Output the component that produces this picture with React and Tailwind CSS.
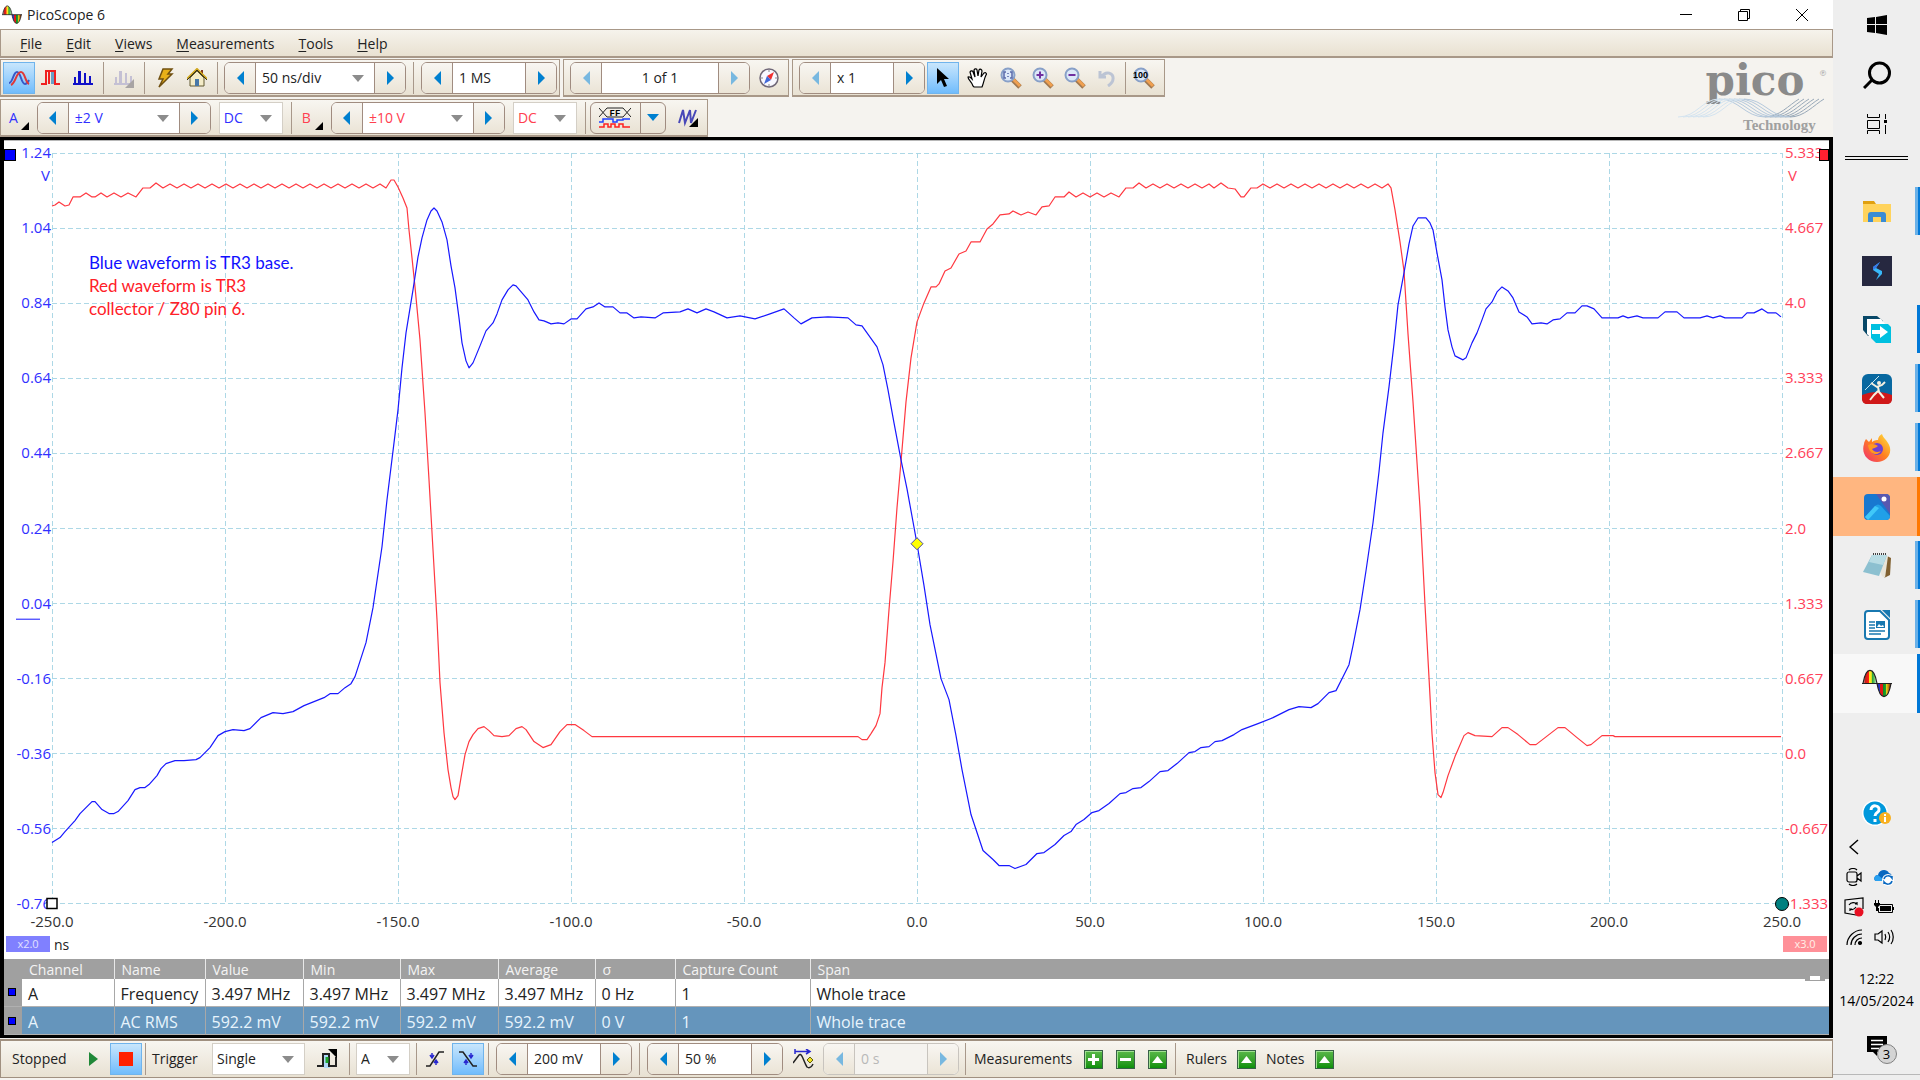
import { useState } from "react";

const BLUE_TRACE = "52,843 60,838 65,832 75,821 80,814 92,802 95,802 102,810 109,814 114,814 118,812 128,801 135,790 140,788 145,788 149,785 157,776 161,769 166,764 175,761 184,761 196,760 200,758 210,748 218,736 225,732 233,730 244,731 250,729 261,718 273,713 283,714 293,712 304,706 314,702 324,698 330,694 338,694 345,688 351,684 355,677 366,643 373,608 382,547 387,500 394,443 398,410 402,368 406,333 413,290 418,257 422,238 427,220 431,211 434,208 437,211 442,222 447,240 451,266 455,288 459,318 462,343 466,361 469,368 473,363 480,346 486,331 493,323 497,314 502,300 508,290 513,285 516,286 522,293 528,300 534,312 539,320 544,321 551,324 558,323 564,324 571,319 577,319 586,309 593,307 599,303 605,307 613,307 620,313 627,313 634,318 641,317 655,318 663,313 680,312 688,309 697,313 706,309 714,312 727,318 740,316 755,319 770,314 784,309 794,318 801,324 812,318 828,317 848,318 856,325 862,326 872,340 877,347 883,365 888,390 894,423 901,460 907,489 917,544 924,586 930,625 941,679 949,700 956,736 962,770 971,815 983,851 993,860 999,866 1009,866 1015,869 1026,865 1037,854 1044,853 1055,845 1064,836 1071,832 1076,825 1084,820 1092,813 1099,811 1109,804 1120,794 1126,793 1133,789 1141,788 1149,782 1160,772 1168,771 1177,764 1189,753 1195,752 1201,748 1209,747 1215,742 1222,741 1234,735 1242,730 1258,724 1273,718 1289,710 1299,707 1311,708 1318,704 1329,693 1336,691 1343,677 1349,665 1353,646 1360,610 1366,571 1373,523 1379,472 1383,433 1389,387 1394,344 1398,305 1404,273 1409,244 1413,226 1418,218 1426,218 1430,223 1433,230 1437,253 1442,280 1445,307 1448,330 1452,347 1455,356 1463,360 1466,358 1472,343 1477,333 1482,320 1486,309 1492,302 1497,292 1502,287 1508,291 1513,298 1519,312 1527,317 1532,324 1541,323 1547,324 1553,320 1560,319 1567,313 1575,313 1582,306 1587,306 1594,309 1602,318 1618,318 1623,316 1628,318 1637,316 1643,318 1658,318 1665,312 1677,312 1684,318 1700,318 1707,316 1713,318 1720,316 1725,318 1742,318 1747,313 1754,313 1762,309 1768,313 1776,313 1781,317";

// ripple along the top of the square wave
function ripple(from, count) {
  let pts = "";
  for (let i = 0; i < count; i++) {
    pts += `${from + i * 14},188 ${from + 7 + i * 14},184 `;
  }
  return pts;
}

const RED_TRACE =
  "52,206 55,205 59,202 65,206 69,205 73,197 80,197 86,193 92,197 95,197 101,193 107,197 114,193 121,197 128,193 136,197 143,188 150,188 156,183 " +
  ripple(163, 16) +
  "386,188 391,180 394,180 398,187 403,198 407,208 409,230 412,258 415,287 420,340 425,413 429,480 433,550 437,620 440,683 444,733 448,770 451,788 453,797 455,800 458,796 461,778 465,755 469,742 473,735 478,729 484,727 489,731 494,736 502,737 509,736 516,729 522,727 526,730 534,742 543,748 551,745 560,732 567,725 575,725 584,731 592,737 858,737 862,740 867,740 871,734 876,726 880,714 882,688 885,663 889,610 893,562 897,508 901,462 906,402 911,358 917,322 924,303 931,287 936,287 939,284 945,271 951,268 959,254 966,251 971,242 980,242 987,229 993,224 1000,215 1009,214 1013,211 1021,215 1028,212 1036,215 1042,207 1049,206 1055,197 1064,197 1069,192 1076,197 1083,193 1090,197 1097,193 1104,197 1111,193 1119,197 1126,188 1133,188 1139,183 " +
  ripple(1146, 5) +
  "1214,188 1221,183 1228,188 1235,189 1241,197 1244,197 1251,188 1257,188 1263,184 " +
  ripple(1270, 8) +
  "1382,188 1388,184 1391,188 1395,210 1400,242 1404,271 1408,334 1413,402 1420,508 1425,605 1429,678 1432,734 1435,773 1438,795 1441,798 1443,793 1448,776 1455,757 1464,736 1468,733 1475,736 1492,737 1502,728 1508,728 1518,735 1530,745 1536,745 1558,728 1565,728 1577,738 1587,746 1591,745 1602,736 1613,736 1615,737 1781,737";

const leftAxis = ["1.24", "1.04", "0.84", "0.64", "0.44", "0.24", "0.04", "-0.16", "-0.36", "-0.56", "-0.76"];
const rightAxis = ["5.333", "4.667", "4.0", "3.333", "2.667", "2.0", "1.333", "0.667", "0.0", "-0.667", "-1.333"];
const timeAxis = ["-250.0", "-200.0", "-150.0", "-100.0", "-50.0", "0.0", "50.0", "100.0", "150.0", "200.0", "250.0"];

const rows = [
  { id: 1, cells: ["A", "Frequency", "3.497 MHz", "3.497 MHz", "3.497 MHz", "3.497 MHz", "0 Hz", "1", "Whole trace"] },
  { id: 2, cells: ["A", "AC RMS", "592.2 mV", "592.2 mV", "592.2 mV", "592.2 mV", "0 V", "1", "Whole trace"] },
];

function Sep() {
  return <div className="h-8 w-px shrink-0 bg-[#a8988a]" />;
}

function Arrow({ left, off }) {
  return (
    <svg width="7" height="14" viewBox="0 0 7 14" className={off ? "text-[#78b8e0]" : "text-[#0080d0]"}>
      <path d={left ? "M7 0V14L0 7Z" : "M0 0V14L7 7Z"} fill="currentColor" />
    </svg>
  );
}

// value box with a step button at each end
function Spin({ label, value, width, drop, color = "text-[#222]", offLeft, offRight, center, off }) {
  const edge = off ? "border-[#c8c4be]" : "border-[#a08c80]";
  return (
    <div className={`flex h-8 shrink-0 overflow-hidden rounded-md border ${edge} bg-white ${width}`}>
      <button aria-label={`${label} down`} disabled={offLeft} className={`flex w-[31px] shrink-0 items-center justify-center border-r bg-gradient-to-b from-[#f8f6f2] to-[#ebe4d6] ${edge}`}>
        <Arrow left off={offLeft} />
      </button>
      {drop ? (
        <div className="relative min-w-0 flex-1">
          <select aria-label={label} className={`h-full w-full appearance-none bg-white px-1.5 outline-none ${color}`}>
            <option>{value}</option>
          </select>
          <Chevron />
        </div>
      ) : (
        <input aria-label={label} defaultValue={value} disabled={off} className={`min-w-0 flex-1 px-1.5 outline-none ${center ? "text-center" : ""} ${off ? "bg-[#f5f3ef] text-[#b8b8b8]" : `bg-white ${color}`}`} />
      )}
      <button aria-label={`${label} up`} disabled={offRight} className={`flex w-[31px] shrink-0 items-center justify-center border-l bg-gradient-to-b from-[#f8f6f2] to-[#ebe4d6] ${edge}`}>
        <Arrow off={offRight} />
      </button>
    </div>
  );
}

function Chevron() {
  return (
    <svg width="12" height="7" viewBox="0 0 12 7" className="pointer-events-none absolute top-3 right-2.5">
      <path d="M0 0H12L6 7Z" fill="#8c8c8c" />
    </svg>
  );
}

function Select({ label, value, width, color = "text-[#222]" }) {
  return (
    <div className={`relative h-8 shrink-0 border border-[#d4cfc6] bg-white ${width}`}>
      <select aria-label={label} className={`h-full w-full appearance-none px-1 outline-none ${color}`}>
        <option>{value}</option>
      </select>
      <Chevron />
    </div>
  );
}

function Tool({ label, active, children }) {
  return (
    <button aria-label={label} className={`flex h-8 w-8 shrink-0 items-center justify-center ${active ? "border border-[#70b4ec] bg-gradient-to-b from-[#c8e6fc] to-[#70bcfc]" : ""}`}>
      {children}
    </button>
  );
}

function Bars({ color, corner }) {
  return (
    <svg width="20" height="20" viewBox="0 0 20 20" fill={color}>
      <path d="M0 15H20V17H0ZM1 9H3V15H1ZM5 3H8V15H5ZM11 5H13V15H11ZM16 8H18V15H16Z" />
      {corner && <path d="M20 11V20H11Z" fill="#a8a4a4" />}
    </svg>
  );
}

function Lens({ mark }) {
  return (
    <svg width="22" height="22" viewBox="0 0 22 22">
      <path d="M12 12L20 20" stroke="#a07850" strokeWidth="5" />
      <path d="M13 12L20 19" stroke="#f0a050" strokeWidth="3" />
      <circle cx="8" cy="8" r="6.5" fill="#dce8f8" stroke="#88a0c8" strokeWidth="2" />
      {mark === "plus" && <path d="M4.500 8H11.500M8 4.500V11.500" stroke="#7030a0" strokeWidth="2" />}
      {mark === "minus" && <path d="M4.500 8H11.500" stroke="#7030a0" strokeWidth="2" />}
      {mark === "box" && <path d="M6 5H4V11H6M10 5H12V11H10M8 6V7M8 9V10" fill="none" stroke="#5868a8" strokeWidth="1.500" />}
      {mark === "100" && <text x="0" y="11" fontSize="9" fontWeight="700" fill="#000" fontFamily="Liberation Sans">100</text>}
    </svg>
  );
}

function PicoIcon({ size }) {
  return (
    <svg width={size} height={size} viewBox="0 0 30 30">
      <defs>
        <linearGradient id="hump" x1="0" x2="1" y1="0" y2="0">
          <stop offset="0" stopColor="#e8f4e8" /><stop offset=".15" stopColor="#c02020" /><stop offset=".4" stopColor="#ff2010" />
          <stop offset=".42" stopColor="#f8e820" /><stop offset=".6" stopColor="#f8e820" /><stop offset=".64" stopColor="#20a030" />
          <stop offset=".8" stopColor="#60c060" /><stop offset="1" stopColor="#f0fff0" />
        </linearGradient>
        <linearGradient id="dip" x1="0" x2="1" y1="0" y2="0">
          <stop offset="0" stopColor="#2030c0" /><stop offset=".22" stopColor="#2838d0" /><stop offset=".25" stopColor="#e01818" />
          <stop offset=".42" stopColor="#e01818" /><stop offset=".46" stopColor="#109020" /><stop offset=".62" stopColor="#20a030" />
          <stop offset=".66" stopColor="#e8d818" /><stop offset=".82" stopColor="#c08010" /><stop offset="1" stopColor="#801008" />
        </linearGradient>
      </defs>
      <path d="M1 14.500C4 -3 12 -3 15 14.500Z" fill="url(#hump)" />
      <path d="M15 14.500C18 32 26 32 29 14.500Z" fill="url(#dip)" />
      <path d="M0 14.500H30M1 14.500C4 -3 12 -3 15 14.500C18 32 26 32 29 14.500" fill="none" stroke="#202020" strokeWidth="1.200" />
    </svg>
  );
}

function GreenButton({ label, mark }) {
  return (
    <button aria-label={label} className="flex h-[19px] w-[19px] shrink-0 items-center justify-center border border-[#386048] bg-gradient-to-b from-[#58b848] to-[#089008] shadow-[inset_1px_1px_0_#a0e090]">
      <svg width="11" height="11" viewBox="0 0 11 11" fill="#fff">
        {mark === "plus" && <path d="M4 0H7V4H11V7H7V11H4V7H0V4H4Z" />}
        {mark === "minus" && <path d="M0 4H11V7H0Z" />}
        {mark === "up" && <path d="M5.500 2L11 9H0Z" />}
      </svg>
    </button>
  );
}

function TitleBar() {
  return (
    <div className="flex h-[29px] items-center bg-white pr-0.5 pl-0.5">
      <PicoIcon size={20} />
      <h1 className="flex-1 pl-[5px]">PicoScope 6</h1>
      <button aria-label="Minimize" className="flex h-full w-[58px] items-center justify-center">
        <svg width="12" height="12" viewBox="0 0 12 12"><path d="M0 5.500H12" stroke="#000" /></svg>
      </button>
      <button aria-label="Restore" className="flex h-full w-[58px] items-center justify-center">
        <svg width="12" height="12" viewBox="0 0 12 12" fill="none" stroke="#000"><path d="M.5 2.500H9.500V11.500H.5ZM2.500 2.500V.5H11.500V9.500H9.500" /></svg>
      </button>
      <button aria-label="Close" className="flex h-full w-[58px] items-center justify-center">
        <svg width="12" height="12" viewBox="0 0 12 12" stroke="#000"><path d="M0 0L12 12M12 0L0 12" /></svg>
      </button>
    </div>
  );
}

function MenuBar() {
  return (
    <nav className="flex h-[29px] items-center gap-6 border border-b-2 border-[#a89888] bg-gradient-to-b from-[#f6f3ec] to-[#e9e1d1] pt-px pl-[19px]">
      {["File", "Edit", "Views", "Measurements", "Tools", "Help"].map((m) => (
        <button key={m}><span className="underline underline-offset-2">{m[0]}</span>{m.slice(1)}</button>
      ))}
    </nav>
  );
}

function PicoLogo() {
  return (
    <svg width="156" height="76" viewBox="0 0 156 76" className="shrink-0 overflow-visible">
      <text x="78" y="36" fontSize="42" fontWeight="700" fill="#8a8a8a" fontFamily="DejaVu Serif" textAnchor="middle">pico</text>
      <text x="142" y="17" fontSize="8" fill="#a0a0a0" fontFamily="DejaVu Serif">®</text>
      <g fill="none" strokeWidth="1">
        {[0, 5, 10, 15, 20, 25].map((d) => (
          <g key={d}>
            <path d={`M${1 + d} 58C${20 + d} 58 ${25 + d} 40 ${42 + d} 40`} stroke="#d4e4f0" />
            <path d={`M${42 + d} 40C${62 + d} 40 ${68 + d} 58 ${88 + d} 58`} stroke="#b4c8dc" />
            <path d={`M${88 + d} 58C${102 + d} 58 ${112 + d} 46 ${122 + d} 40`} stroke="#98a8b8" />
          </g>
        ))}
      </g>
      <text x="66" y="71" fontSize="15" fill="#a0a0a0" fontFamily="Liberation Serif" fontWeight="700">Technology</text>
    </svg>
  );
}

const bar = "flex h-[38px] items-center border border-b-2 border-[#a89888] bg-gradient-to-b from-[#f8f6f1] to-[#e8e1d2]";

function Corner() {
  return <svg width="8" height="8" viewBox="0 0 8 8" className="mt-4"><path d="M8 0V8H0Z" /></svg>;
}

function Toolbars() {
  return (
    <div className="flex justify-between bg-[#f5f3ef] pt-px">
      <div className="flex flex-col gap-0.5">
        <div className="flex gap-[3px]">
          <div className={`${bar} gap-1 px-0.5`}>
            <div className="flex">
              <Tool label="Scope mode" active>
                <svg width="22" height="18" viewBox="0 0 22 18" fill="none" strokeWidth="2">
                  <path d="M1 14C5 14 5 3 9 3C13 3 13 15 17 15C19 15 20 13 21 11" stroke="#3858c8" />
                  <path d="M3 16C8 14 8 3 13 3C17 3 17 13 21 15" stroke="#e03838" />
                </svg>
              </Tool>
              <Tool label="Persistence mode">
                <svg width="20" height="18" viewBox="0 0 20 18" fill="none" strokeWidth="2">
                  <path d="M10 2V15H14V2Z" fill="#68a0c8" />
                  <path d="M0 15H5V2H14V15H19M8 2V15" stroke="#f02020" />
                </svg>
              </Tool>
              <Tool label="Spectrum mode"><Bars color="#1010c8" /></Tool>
            </div>
            <Sep />
            <Tool label="Spectrum options"><Bars color="#c4c0d4" corner /></Tool>
            <Sep />
            <div className="flex">
              <Tool label="Auto setup">
                <svg width="18" height="20" viewBox="0 0 18 20"><path d="M7 1H16L12 6H16L3 19L7 11H3Z" fill="#e8b018" stroke="#705010" strokeWidth="1.500" /></svg>
              </Tool>
              <Tool label="Home">
                <svg width="20" height="20" viewBox="0 0 20 20">
                  <path d="M14 2H16V7H14Z" fill="#803820" />
                  <path d="M3 10L10 3L17 10V18H3Z" fill="#f4ecc8" stroke="#605830" />
                  <path d="M0 11L10 1L20 11" fill="none" stroke="#d0a820" strokeWidth="2" />
                  <path d="M0 12L10 2L20 12" fill="none" stroke="#383018" strokeWidth="1" />
                  <path d="M8 11H12V18H8Z" fill="#4878a8" />
                </svg>
              </Tool>
            </div>
            <Sep />
            <div className="flex items-center gap-[7px] pl-0.5">
              <Spin label="Timebase" value="50 ns/div" width="w-[182px]" drop />
              <Sep />
              <Spin label="Samples" value="1 MS" width="w-[136px]" />
            </div>
          </div>
          <div className={`${bar} gap-[3px] pr-[3px] pl-1.5`}>
            <Spin label="Buffer" value="1 of 1" width="w-[180px]" center offLeft offRight />
            <Tool label="Buffer overview">
              <svg width="20" height="20" viewBox="0 0 20 20">
                <circle cx="10" cy="10" r="9" fill="#f8f8ff" stroke="#706878" strokeWidth="1.500" />
                <path d="M15 4L12 12L8 8Z" fill="#f03030" />
                <path d="M5 16L8 8L12 12Z" fill="#4068d8" />
                <path d="M10 2V4M10 16V18M2 10H4M16 10H18" stroke="#888" />
              </svg>
            </Tool>
          </div>
          <div className={`${bar} gap-0.5 pr-1 pl-1.5`}>
            <Spin label="Zoom" value="x 1" width="w-[126px]" offLeft />
            <Tool label="Select" active>
              <svg width="14" height="20" viewBox="0 0 14 20"><path d="M1 0V16L5 12L8 19L11 18L8 11H13Z" /></svg>
            </Tool>
            <Tool label="Hand">
              <svg width="21" height="20" viewBox="0 0 21 20"><path d="M6 18C5 14 1 12 1 9C3 8 4 10 5 11L3 4C4 2 6 3 6 4L8 9L7 2C8 0 10 1 10 2L11 8L12 2C13 0 15 2 15 3L14 9L17 5C19 4 20 6 19 7C17 11 17 14 15 19H7Z" fill="#fff" stroke="#000" strokeWidth="1.200" /></svg>
            </Tool>
            <div className="flex">
              <Tool label="Window zoom"><Lens mark="box" /></Tool>
              <Tool label="Zoom in"><Lens mark="plus" /></Tool>
              <Tool label="Zoom out"><Lens mark="minus" /></Tool>
              <Tool label="Undo zoom">
                <svg width="18" height="18" viewBox="0 0 18 18" fill="none" stroke="#bcc4d4" strokeWidth="3"><path d="M2 2V8H8M3 8C8 1 16 4 15 10C15 13 13 15 10 17" /></svg>
              </Tool>
            </div>
            <Sep />
            <Tool label="Zoom full"><Lens mark="100" /></Tool>
          </div>
        </div>
        <div className={`${bar} gap-2 self-start pr-1 pl-2`}>
          <button className="flex items-center gap-[3px] text-[#3030ff]">A<span className="text-black"><Corner /></span></button>
          <Spin label="Channel A range" value="±2 V" width="w-[174px]" drop color="text-[#3030ff]" />
          <Select label="Channel A coupling" value="DC" width="w-16" color="text-[#3030ff]" />
          <Sep />
          <button className="flex items-center gap-1 pl-0.5 text-[#ff4050]">B<span className="text-black"><Corner /></span></button>
          <Spin label="Channel B range" value="±10 V" width="w-[174px]" drop color="text-[#ff4050]" />
          <Select label="Channel B coupling" value="DC" width="w-16" color="text-[#ff4050]" />
          <Sep />
          <div className="-ml-1 flex h-8 overflow-hidden rounded-md border border-[#a08c80]">
            <button aria-label="Digital inputs" className="flex w-[50px] items-center justify-center border-r border-[#a08c80]">
              <svg width="32" height="22" viewBox="0 0 32 22" fill="none" strokeWidth="1.500">
                <path d="M0 1L8 10M8 1L0 10M24 1L32 10M32 1L24 10M8 1H24M8 10H24" stroke="#222" strokeWidth="1" />
                <text x="16" y="9" fontSize="9" fontWeight="700" textAnchor="middle" fill="#000" fontFamily="Liberation Mono">FF</text>
                <path d="M0 15H4V12H14V15H18V13H24V12H31" stroke="#2040ff" />
                <path d="M0 20H5V17H9V20H12V17H16V20H20V17H24V20H31" stroke="#ff2020" />
              </svg>
            </button>
            <button aria-label="Digital menu" className="flex w-6 items-center justify-center">
              <svg width="12" height="7" viewBox="0 0 12 7"><path d="M0 0H12L6 7Z" fill="#0080d0" /></svg>
            </button>
          </div>
          <button aria-label="Signal generator" className="px-1">
            <svg width="21" height="20" viewBox="0 0 21 20"><path d="M1 15L5 2L7 15L12 2L13 15L18 2" fill="none" stroke="#4848b8" strokeWidth="2" /><path d="M20 10V19H11Z" /></svg>
          </button>
        </div>
      </div>
      <PicoLogo />
    </div>
  );
}

function Plot() {
  const lines = [0, 1, 2, 3, 4, 5, 6, 7, 8, 9, 10];
  return (
    <div className="relative flex min-h-0 flex-1 flex-col overflow-hidden border-t border-[#b8b8b8] bg-white pt-3 text-[15px]">
      <div className="flex min-h-0 flex-1">
        <div className="flex w-12 flex-col justify-between pr-px text-right text-[#3030ff]">
          {leftAxis.map((v) => <span key={v} className="flex h-0 items-center justify-end">{v}</span>)}
        </div>
        <svg viewBox="52 153 1730 751" preserveAspectRatio="none" className="min-h-0 min-w-0 flex-1 overflow-visible" fill="none">
          <g stroke="#add8e6" strokeDasharray="5 3" shapeRendering="crispEdges">
            {lines.map((i) => <path key={`v${i}`} d={`M${52 + i * 173} 153V904`} vectorEffect="non-scaling-stroke" />)}
            {lines.map((i) => <path key={`h${i}`} d={`M52 ${153 + i * 75.1}H1782`} vectorEffect="non-scaling-stroke" />)}
          </g>
          <polyline points={RED_TRACE} stroke="#ff3840" strokeWidth="1.200" strokeLinejoin="round" vectorEffect="non-scaling-stroke" />
          <polyline points={BLUE_TRACE} stroke="#1818ff" strokeWidth="1.200" strokeLinejoin="round" vectorEffect="non-scaling-stroke" />
          <path d="M911 544L917 538L923 544L917 550Z" fill="#ffff00" stroke="#4848a0" />
          <path d="M16 619.500H40" stroke="#1010ff" strokeWidth="1" />
          <path d="M47 899H57V909H47Z" fill="#fff" stroke="#000" strokeWidth="1.500" />
        </svg>
        <div className="flex w-[47px] flex-col justify-between pl-[3px] text-[#ff4058]">
          {rightAxis.map((v) => <span key={v} className="flex h-0 items-center">{v}</span>)}
        </div>
      </div>
      <div className="mr-[47px] ml-12 flex h-8 items-center justify-between pt-1 text-[#333]">
        {timeAxis.map((v) => <span key={v} className="flex w-0 justify-center">{v}</span>)}
      </div>
      <div className="flex h-[23px] items-start gap-1 pr-0.5 pl-0.5">
        <button className="h-4 w-11 bg-[#8080ff] text-[11px] leading-4 text-[#e0e0ff]">x2.0</button>
        <span className="flex-1 text-sm leading-[18px] text-[#222]">ns</span>
        <button className="h-4 w-11 bg-[#ff9098] text-[11px] leading-4 text-[#fff0e8]">x3.0</button>
      </div>
      <span className="absolute top-6 left-[30px] flex w-4 justify-end text-[#3030ff]">V</span>
      <span className="absolute top-6 right-8 text-[#ff4058]">V</span>
      <button aria-label="Channel A handle" className="absolute top-2 left-0 h-3 w-3 border border-black bg-[#0000ff]" />
      <button aria-label="Channel B handle" className="absolute top-2 right-0 h-3 w-2.5 border border-black bg-[#ff2030]" />
      <span className="absolute right-10 bottom-12 h-3.5 w-3.5 rounded-full border border-black bg-[#008080]" />
      <div className="absolute top-[110px] left-[85px] w-[220px] font-[Lato,sans-serif] text-[17px] leading-[23px]">
        <p className="text-[#1010ff]">Blue waveform is TR3 base.</p>
        <p className="text-[#ff2028]">Red waveform is TR3<br />collector / Z80 pin 6.</p>
      </div>
    </div>
  );
}

function Measurements() {
  const [selected, setSelected] = useState(2);
  return (
    <div className="relative">
      <table className="w-full table-fixed border-collapse text-left">
        <colgroup>
          <col className="w-[18px]" />
          <col className="w-[92px]" />
          <col className="w-[91px]" />
          <col className="w-[98px]" />
          <col className="w-[97px]" />
          <col className="w-[98px]" />
          <col className="w-[97px]" />
          <col className="w-20" />
          <col className="w-[135px]" />
          <col />
        </colgroup>
        <thead>
          <tr className="h-5 bg-[#a0a0a0] text-sm leading-4 text-[#f4f4f4]">
            <td />
            {["Channel", "Name", "Value", "Min", "Max", "Average", "σ", "Capture Count", "Span"].map((h) => (
              <th key={h} className="border-r border-[#e8e8e8] p-0 pt-0.5 pl-[7px] font-normal last:border-0">{h}</th>
            ))}
          </tr>
        </thead>
        <tbody>
          {rows.map((r) => (
            <tr key={r.id} onClick={() => setSelected(r.id)} className={`h-7 border-b border-[#b0b0b0] text-base leading-5 ${selected === r.id ? "bg-[#6595bc] text-[#e8f4fc]" : "bg-white text-[#222]"}`}>
              <td className="bg-[#a0a0a0] p-0 pl-1"><div className="h-2 w-2 border border-black bg-[#0000ff]" /></td>
              {r.cells.map((c, i) => (
                <td key={i} className="border-r border-[#a8a8a8] p-0 pt-[3px] pl-1.5 whitespace-nowrap last:border-0">{c}</td>
              ))}
            </tr>
          ))}
        </tbody>
      </table>
      <button aria-label="Collapse" className="absolute top-4 right-1 flex h-1.5 w-5 items-center justify-center bg-[#a0a0a0]"><span className="h-1 w-2.5 bg-white" /></button>
    </div>
  );
}

function TriggerBar() {
  return (
    <div className="mt-px mb-0.5 flex h-[39px] shrink-0 items-center border border-t-2 border-[#a09080] bg-gradient-to-b from-[#f8f6f1] to-[#e8e1d2]">
      <span className="w-[77px] pl-[11px]">Stopped</span>
      <Tool label="Start"><svg width="10" height="16" viewBox="0 0 10 16"><path d="M0 1L9 8L0 15Z" fill="#208838" /></svg></Tool>
      <Tool label="Stop" active><span className="h-3.5 w-3.5 bg-[#ff2000]" /></Tool>
      <div className="flex items-center gap-1.5 pl-[3px]">
        <Sep />
        <span className="w-[54px]">Trigger</span>
        <Select label="Trigger mode" value="Single" width="w-[93px]" />
        <Tool label="Advanced triggers">
          <svg width="20" height="20" viewBox="0 0 20 20" fill="none" strokeWidth="2">
            <path d="M7 4H13V19H7Z" fill="#b0d8f8" />
            <path d="M0 17H6V5H12V17H19V8" stroke="#222" />
            <path d="M10 8V14" stroke="#20a830" strokeWidth="3" />
            <path d="M11 0H20V9Z" fill="#000" />
          </svg>
        </Tool>
        <Sep />
        <Select label="Trigger source" value="A" width="w-[54px]" />
        <Sep />
      </div>
      <div className="flex gap-px pl-0.5">
        <Tool label="Rising edge">
          <svg width="20" height="20" viewBox="0 0 20 20" fill="none" stroke="#222" strokeWidth="1.500"><path d="M1 17H5L14 3H19" /><path d="M7 4V8M5 6L7 9L9 6M11 16V12M9 14L11 11L13 14" stroke="#2828d0" /></svg>
        </Tool>
        <Tool label="Falling edge" active>
          <svg width="20" height="20" viewBox="0 0 20 20" fill="none" stroke="#222" strokeWidth="1.500"><path d="M1 3H5L15 17H19" /><path d="M13 4V8M11 6L13 9L15 6M8 16V12M6 14L8 11L10 14" stroke="#2828d0" /></svg>
        </Tool>
      </div>
      <div className="flex items-center gap-[7px] pl-1">
        <Sep />
        <Spin label="Threshold" value="200 mV" width="w-[136px]" />
        <Sep />
        <Spin label="Pre-trigger" value="50 %" width="w-[136px]" />
      </div>
      <div className="flex items-center gap-1 pl-1">
        <Tool label="Trigger delay">
          <svg width="21" height="20" viewBox="0 0 21 20" fill="none" strokeWidth="1.500">
            <path d="M0 14L6 6C9 3 11 14 14 18C17 20 19 17 20 15" stroke="#222" />
            <path d="M2 0V5M2 2.500H17M13 0L17 2.500L13 5" stroke="#2828d0" />
            <path d="M17 8L20 11L17 14L14 11Z" fill="#f0e020" stroke="#606010" strokeWidth="1" />
          </svg>
        </Tool>
        <Spin label="Delay" value="0 s" width="w-[136px]" off offLeft offRight />
      </div>
      <div className="flex items-center gap-2 pl-[6px]">
        <Sep />
        <span className="w-[102px]">Measurements</span>
        <div className="flex gap-[13px]">
          <GreenButton label="Add measurement" mark="plus" />
          <GreenButton label="Delete measurement" mark="minus" />
          <GreenButton label="Edit measurement" mark="up" />
        </div>
        <Sep />
      </div>
      <div className="flex items-center gap-2.5 pl-2.5">
        Rulers <GreenButton label="Rulers" mark="up" />
        Notes <GreenButton label="Notes" mark="up" />
      </div>
    </div>
  );
}

const apps = [
  {
    name: "File Explorer", mark: "double",
    icon: (
      <svg width="28" height="24" viewBox="0 0 28 24">
        <path d="M0 1H11L13 4H0Z" fill="#e0a010" /><path d="M0 4H28V22H0Z" fill="#ffd35c" />
        <path d="M5 22V15C5 13 6 12 8 12H20C22 12 23 13 23 15V22H18V17H10V22Z" fill="#3a8cd4" />
      </svg>
    ),
  },
  {
    name: "Shell", mark: "",
    icon: (
      <svg width="30" height="30" viewBox="0 0 30 30">
        <path d="M0 0H30V30H0Z" fill="#262840" /><path d="M18 6L11 11V14L17 18L14 24L20 18V15L14 12Z" fill="#38b8f8" /><path d="M18 6L11 11V14L14 12Z" fill="#3878e8" />
      </svg>
    ),
  },
  {
    name: "Free Download", mark: "single",
    icon: (
      <svg width="28" height="28" viewBox="0 0 28 28">
        <path d="M0 0H14L20 5V20H5L0 14Z" fill="#084868" /><path d="M4 3H18L22 8V22H8L4 18Z" fill="#fff" />
        <path d="M8 8H25L28 11V27H13L8 22Z" fill="#00c0e0" /><path d="M9 14H17V10L25 16L17 22V18H9Z" fill="#fff" />
      </svg>
    ),
  },
  {
    name: "Javelin", mark: "double",
    icon: (
      <svg width="30" height="30" viewBox="0 0 30 30">
        <rect width="30" height="30" rx="6" fill="#0868a0" /><path d="M0 21C10 17 20 17 30 21V25C30 28 28 30 25 30H5C2 30 0 28 0 25Z" fill="#d01818" />
        <path d="M3 16L17 2" stroke="#c8e8f0" strokeWidth="1" /><circle cx="17" cy="9" r="2" fill="#f4f0e0" />
        <path d="M9 9L15 13L20 11L23 8M16 13L17 18L22 24M16 17L12 21L8 26" fill="none" stroke="#f4f0e0" strokeWidth="2" />
      </svg>
    ),
  },
  {
    name: "Firefox", mark: "double",
    icon: (
      <svg width="30" height="30" viewBox="0 0 30 30">
        <defs><linearGradient id="fox" x1="1" y1="0" x2="0" y2="1"><stop offset="0" stopColor="#ffe840" /><stop offset=".5" stopColor="#ff8020" /><stop offset="1" stopColor="#f02878" /></linearGradient></defs>
        <path d="M4 6L7 9L10 5V9C13 7 15 7 16 7C16 4 18 2 20 1C21 5 24 6 26 10C32 19 25 29 15 29C5 29 -1 20 2 11C2 9 3 8 4 6Z" fill="url(#fox)" />
        <circle cx="15" cy="16" r="6" fill="#7040d0" /><path d="M6 12C10 10 13 11 16 13C14 15 11 15 10 16C12 19 15 20 19 18C15 24 7 21 6 12Z" fill="#ff9820" />
      </svg>
    ),
  },
  {
    name: "Photos", mark: "photos",
    icon: (
      <svg width="26" height="26" viewBox="0 0 26 26">
        <rect width="26" height="26" rx="4" fill="#1878d0" /><path d="M12 0H22C24 0 26 2 26 4V20Z" fill="#5858b0" />
        <path d="M1 23L11 12C13 10 15 10 17 12L26 22C26 25 24 26 22 26H4Z" fill="#20a0e8" /><path d="M1 23L11 12L15 14L4 26Z" fill="#40c8f8" /><circle cx="20" cy="5" r="2.500" fill="#fff" />
      </svg>
    ),
  },
  {
    name: "Notepad", mark: "double",
    icon: (
      <svg width="28" height="26" viewBox="0 0 28 26">
        <path d="M24 3L28 5L27 22L21 25Z" fill="#806030" /><path d="M10 2L25 3L22 25L19 23Z" fill="#e8e4d8" />
        <path d="M9 2H24L16 23L0 19Z" fill="#8cc0d0" /><path d="M9 2H24L20 12L6 9Z" fill="#b8dce4" /><path d="M10 1H24" stroke="#404040" strokeWidth="2" strokeDasharray="1 1" />
      </svg>
    ),
  },
  {
    name: "Writer", mark: "double",
    icon: (
      <svg width="26" height="30" viewBox="0 0 26 30">
        <path d="M4 1H16L25 10V26C25 28 24 29 22 29H4C2 29 1 28 1 26V4C1 2 2 1 4 1Z" fill="#fff" stroke="#1878b0" strokeWidth="2" />
        <path d="M18 0H26V8Z" fill="#1878b0" /><path d="M5 12H11M5 15H11M5 18H11M5 21H21M5 24H17" stroke="#1878b0" strokeWidth="1.500" />
        <path d="M12 11H21V18H12Z" fill="#1878b0" /><path d="M13 17L15 14L17 16L19 15L20 17Z" fill="#fff" />
      </svg>
    ),
  },
  { name: "PicoScope", mark: "active", icon: <PicoIcon size={30} /> },
];

const itemBg = { photos: "bg-[#ffb680]", active: "bg-[#f8f8f8]" };

function Taskbar() {
  return (
    <aside className="flex w-[87px] shrink-0 flex-col items-center bg-[#eeeeee] text-black">
      <button aria-label="Start menu" className="flex h-[50px] items-center">
        <svg width="20" height="20" viewBox="0 0 20 20"><path d="M0 3L8 2V9H0ZM9 2L20 0V9H9ZM0 10H8V18L0 17ZM9 10H20V20L9 18Z" /></svg>
      </button>
      <button aria-label="Search" className="flex h-[50px] items-center">
        <svg width="28" height="28" viewBox="0 0 28 28" fill="none" stroke="#000" strokeWidth="3"><circle cx="16.500" cy="12" r="10" /><path d="M9 19L1 27" /></svg>
      </button>
      <button aria-label="Task view" className="flex h-12 items-center">
        <svg width="20" height="20" viewBox="0 0 20 20" fill="none" stroke="#000"><path d="M.5 0V3.500H12.500V0M.5 6.500H12.500V14.500H.5ZM.5 20V16.500H12.500V20M18.500 0V5M18.500 11V20" /><path d="M17 6H20V9H17Z" fill="#000" stroke="none" /></svg>
      </button>
      <div className="mt-2 mb-[22px] h-1 w-[63px] border-y border-black" />
      {apps.map((a) => (
        <button key={a.name} aria-label={a.name} className={`relative flex h-[59px] w-full items-center justify-center ${itemBg[a.mark] || ""}`}>
          {a.icon}
          {a.mark === "double" && <span className="absolute top-[5px] right-0 h-12 w-[5px] border-r-2 border-[#0078d7] bg-[#68b0e8]" />}
          {a.mark === "single" && <span className="absolute top-[5px] right-0 h-12 w-[3px] bg-[#0078d7]" />}
          {a.mark === "active" && <span className="absolute inset-y-0 right-0 w-[3px] bg-[#0078d7]" />}
          {a.mark === "photos" && <span className="absolute inset-y-0 right-0 w-[3px] bg-[#ff7800]" />}
        </button>
      ))}
      <div className="flex-1" />
      <button aria-label="Help">
        <svg width="30" height="28" viewBox="0 0 30 28">
          <circle cx="13" cy="13" r="13" fill="#fff" /><circle cx="13" cy="13" r="11.500" fill="#0098dc" />
          <path d="M9 10C9 4 18 5 17 10C17 13 13 12 13 16M13 19V22" fill="none" stroke="#fff" strokeWidth="3" />
          <circle cx="23" cy="18" r="6" fill="#f8b020" /><path d="M23 17V22M23 14V16" stroke="#fff" strokeWidth="2" />
        </svg>
      </button>
      <div className="mt-2 ml-1.5 grid w-[60px] grid-cols-2 place-items-center gap-y-2 self-start">
        <button aria-label="Hidden icons" className="flex h-[22px] items-center">
          <svg width="10" height="16" viewBox="0 0 10 16" fill="none" stroke="#000" strokeWidth="1.500"><path d="M9 1L1 8L9 15" /></svg>
        </button>
        <span />
        <button aria-label="Meet now" className="flex h-[22px] items-center">
          <svg width="16" height="18" viewBox="0 0 16 18" fill="none" stroke="#000" strokeWidth="1.200"><path d="M3 2C5 0 9 0 11 2M3 16C5 18 9 18 11 16M3 4H9C10 4 11 5 11 6V12C11 13 10 14 9 14H3C2 14 1 13 1 12V6C1 5 2 4 3 4ZM11 8L15 5V13L11 10" /></svg>
        </button>
        <button aria-label="OneDrive" className="flex h-[22px] items-center">
          <svg width="22" height="18" viewBox="0 0 22 18">
            <path d="M3 13C0 12 1 7 5 7C6 2 13 0 16 5C20 6 20 12 17 13Z" fill="#0868c0" /><path d="M3 13C0 12 1 7 5 7L12 13Z" fill="#28a0f0" />
            <circle cx="15" cy="12" r="6" fill="#fff" /><path d="M11 11C12 7 17 7 19 10V8M19 13C18 17 13 17 11 14V16" fill="none" stroke="#0868c0" strokeWidth="1.500" />
          </svg>
        </button>
        <button aria-label="Update" className="flex h-[22px] items-center">
          <svg width="20" height="20" viewBox="0 0 20 20" fill="none" stroke="#000" strokeWidth="1.200">
            <path d="M12 18L1 16V3L19 1V12" /><path d="M5 8C7 5 11 5 13 7V5M13 7H11M12 10C10 13 8 13 6 12V14M6 12H8" /><circle cx="15" cy="15" r="4.500" fill="#e81123" stroke="none" />
          </svg>
        </button>
        <button aria-label="Battery" className="flex h-[22px] items-center">
          <svg width="20" height="14" viewBox="0 0 20 14"><path d="M6 4.500H18.500V12.500H4.500V8" fill="none" stroke="#000" /><path d="M6 6H17V11H6ZM19 7H20V10H19ZM0 3H6V5L4 7V11H2V7L0 5ZM1 0H2V3H1ZM4 0H5V3H4Z" /></svg>
        </button>
        <button aria-label="Network" className="flex h-[22px] items-center">
          <svg width="17" height="17" viewBox="0 0 17 17" fill="none" stroke="#000" strokeWidth="1.200"><path d="M1 16C1 8 8 1 16 1M5 16C5 10 10 5 16 5M9 16C9 12 12 9 16 9" /><circle cx="14" cy="14" r="1.500" fill="#000" /></svg>
        </button>
        <button aria-label="Volume" className="flex h-[22px] items-center">
          <svg width="21" height="16" viewBox="0 0 21 16" fill="none" stroke="#000" strokeWidth="1.200"><path d="M1 5H4L8 2V14L4 11H1ZM11 5C12 7 12 9 11 11M14 3C16 6 16 10 14 13M17 1C20 5 20 11 17 15" /></svg>
        </button>
      </div>
      <div className="mt-5 text-center text-sm leading-[22px]">
        <p>12:22</p>
        <p>14/05/2024</p>
      </div>
      <button aria-label="Notifications" className="relative mt-6 mb-4">
        <svg width="20" height="22" viewBox="0 0 20 22"><path d="M0 0H20V16H10V20L6 16H0Z" /><path d="M4 4.500H16M4 8.500H16M4 12.500H12" stroke="#fff" strokeWidth="1.500" /></svg>
        <span className="absolute top-2 left-2.5 flex h-5 w-5 items-center justify-center rounded-full border border-[#808080] bg-[#d4d4d4] text-[13px]">3</span>
      </button>
      <div className="mb-[5px] h-px w-full bg-[#b8b8b8]" />
    </aside>
  );
}

function App() {
  return (
    <div className="flex h-screen min-h-[900px] bg-[#f5f3ef] font-['Open_Sans','Noto_Sans',sans-serif] text-sm text-[#222]">
      <main className="flex min-w-0 flex-1 flex-col">
        <TitleBar />
        <MenuBar />
        <Toolbars />
        <section className="flex min-h-0 flex-1 flex-col border-[3px] border-x-4 border-black">
          <Plot />
          <Measurements />
        </section>
        <TriggerBar />
      </main>
      <Taskbar />
    </div>
  );
}

export default App;
